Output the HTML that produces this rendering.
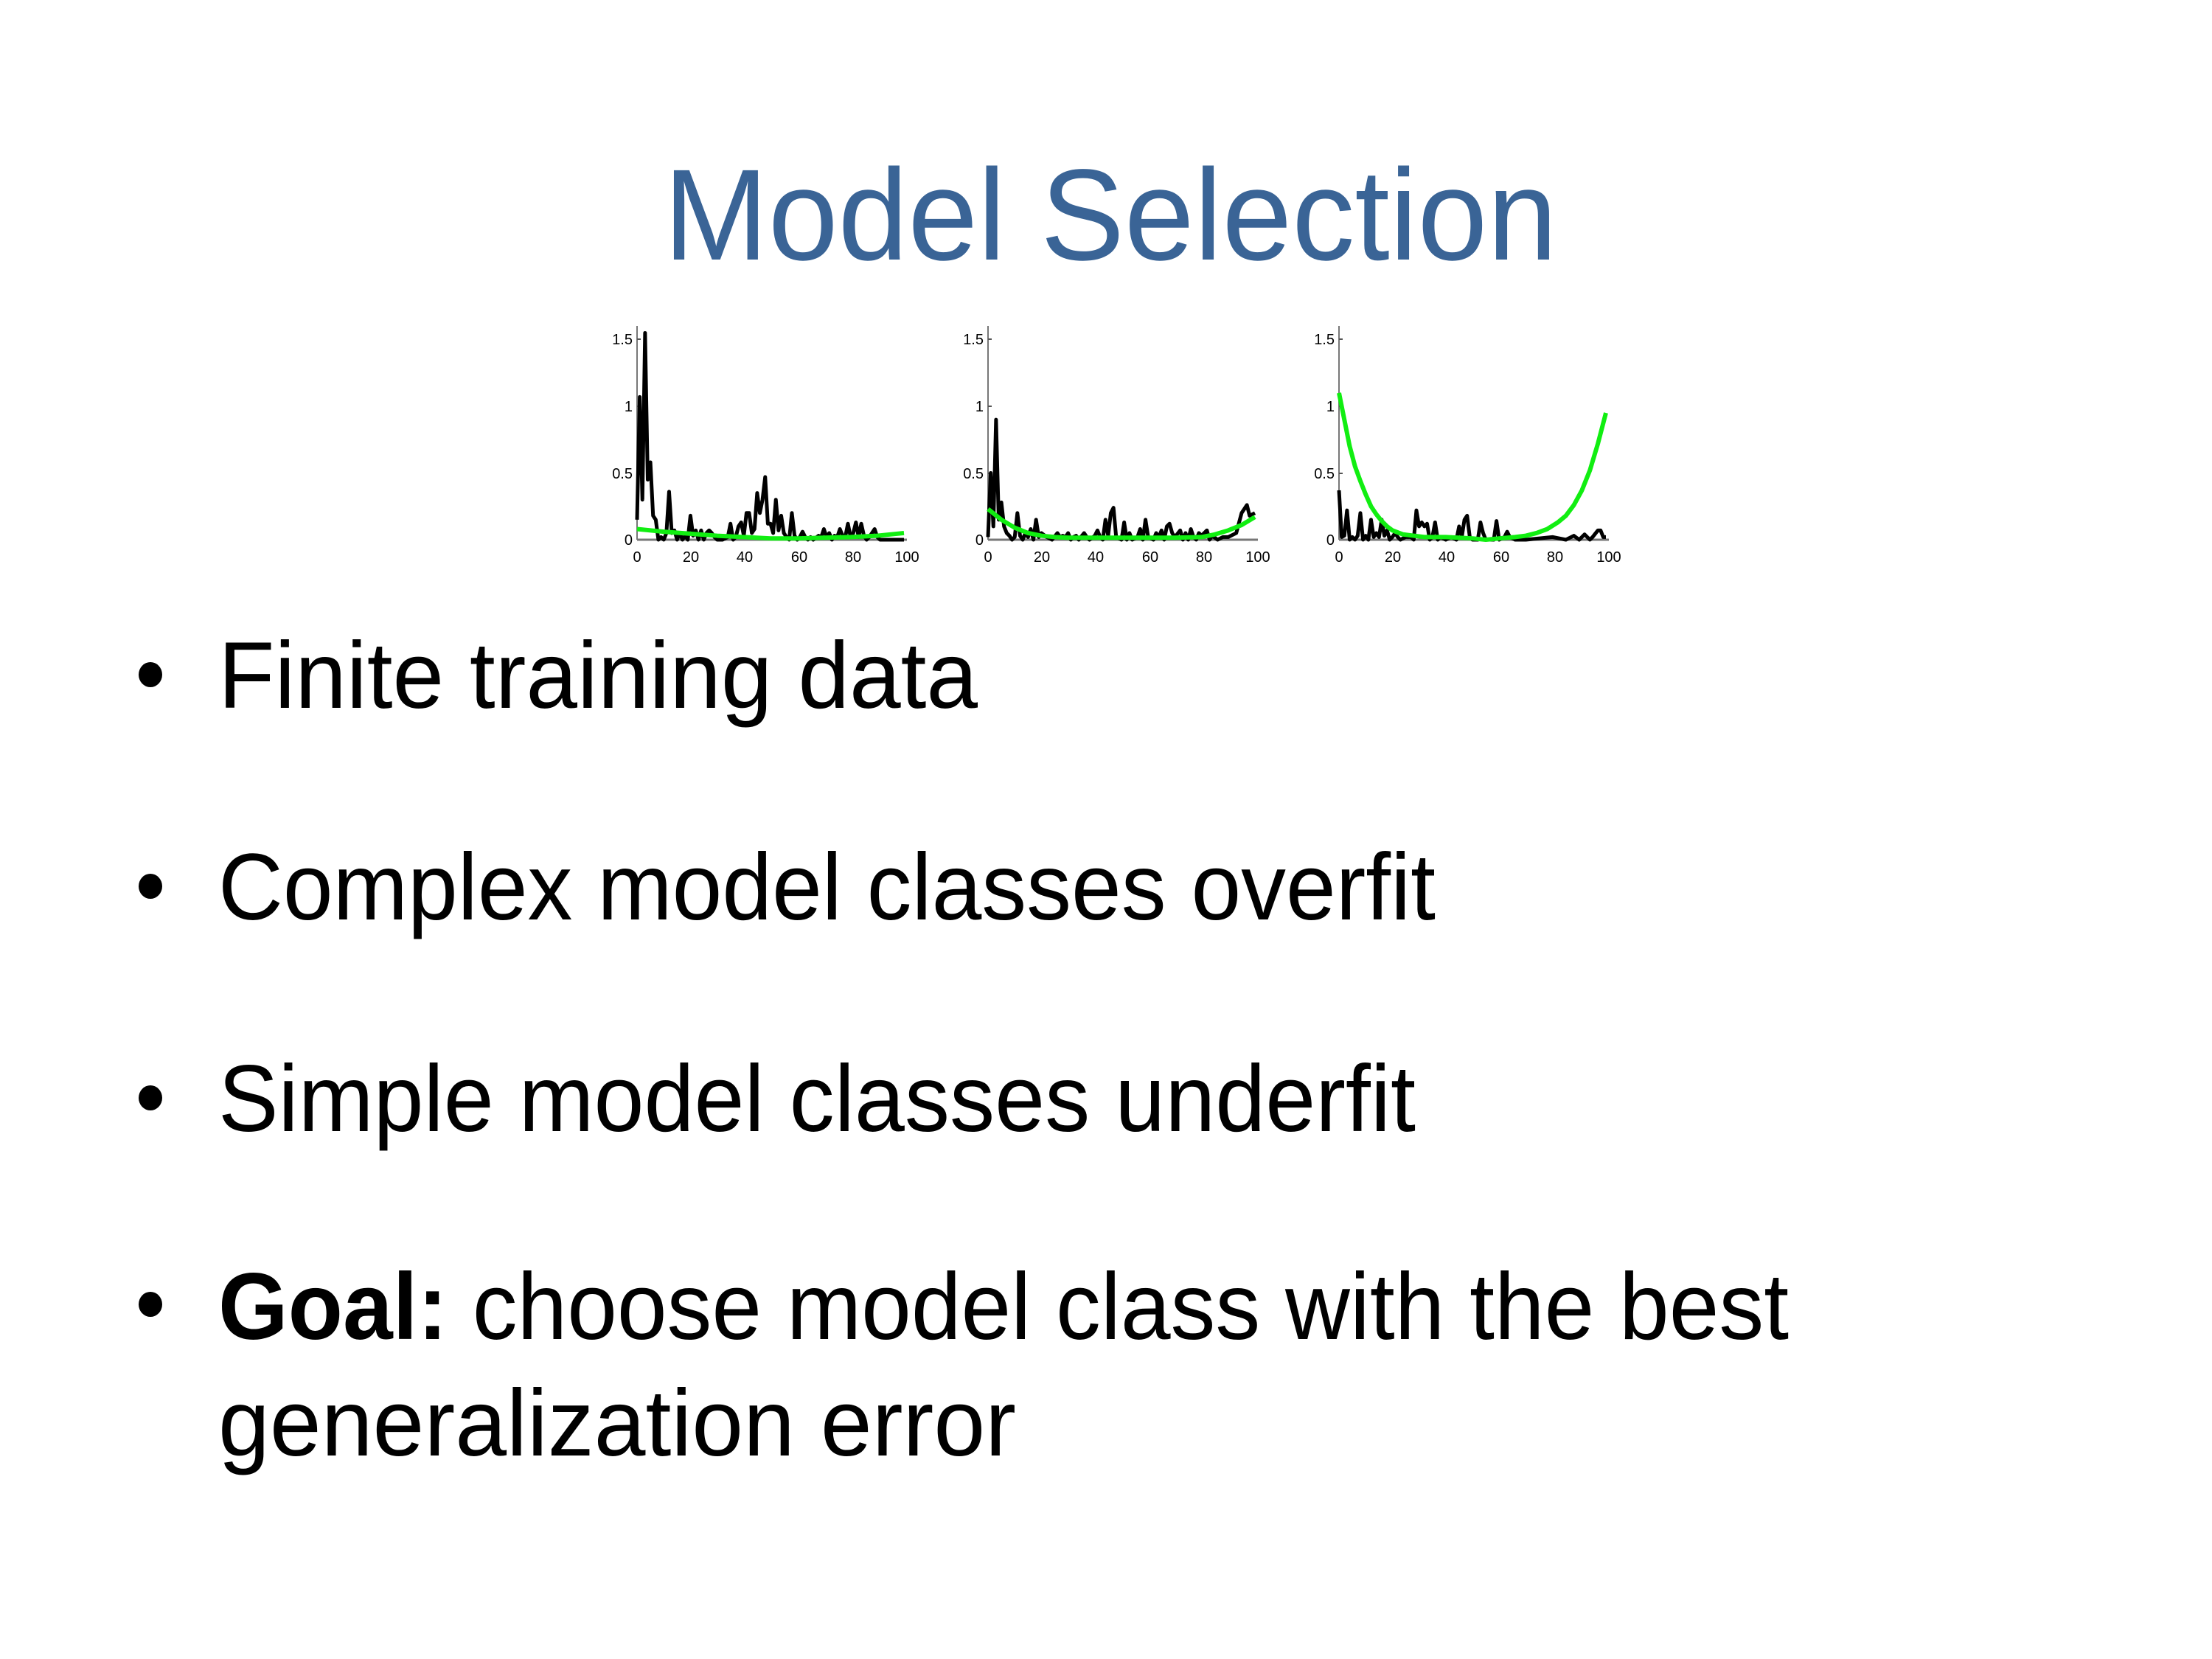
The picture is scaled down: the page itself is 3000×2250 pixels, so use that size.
<!DOCTYPE html>
<html><head><meta charset="utf-8"><style>
html,body{margin:0;padding:0;background:#fff;}
svg{display:block;}
</style></head><body>
<svg width="3000" height="2250" viewBox="0 0 3000 2250" xmlns="http://www.w3.org/2000/svg">
<rect width="3000" height="2250" fill="#fff"/>
<text x="900" y="352" font-family="Liberation Sans, sans-serif" font-size="176" fill="#3a6496" textLength="1212" lengthAdjust="spacingAndGlyphs">Model Selection</text>

<defs>
<g id="axes">
  <line x1="0" y1="0" x2="0" y2="-290" stroke="#777" stroke-width="2"/>
  <line x1="0" y1="0" x2="366" y2="0" stroke="#777" stroke-width="3"/>
  <g stroke="#555" stroke-width="2">
    <line x1="0" y1="-272" x2="5" y2="-272"/><line x1="0" y1="-181" x2="5" y2="-181"/><line x1="0" y1="-90" x2="5" y2="-90"/>
  </g>
  <g font-family="Liberation Sans, sans-serif" font-size="20" fill="#000" text-anchor="end">
    <text x="-6" y="-265">1.5</text><text x="-6" y="-174">1</text><text x="-6" y="-83">0.5</text><text x="-6" y="7">0</text>
  </g>
  <g font-family="Liberation Sans, sans-serif" font-size="20" fill="#000" text-anchor="middle">
    <text x="0" y="30">0</text><text x="73" y="30">20</text><text x="146" y="30">40</text><text x="220" y="30">60</text><text x="293" y="30">80</text><text x="366" y="30">100</text>
  </g>
</g>
</defs>

<!-- Plot 1 -->
<g transform="translate(864,732)">
<use href="#axes"/>
<g transform="scale(3.62,-181)" fill="none" stroke-linejoin="round">
<polyline vector-effect="non-scaling-stroke" stroke="#000" stroke-width="5" points="0,.15 1,1.07 2,.3 3,1.55 4,.45 5,.58 6,.18 7,.15 8,0 9,.02 10,0 11,.05 12,.36 13,.05 14,.07 15,0 16,.05 17,0 18,.03 19,0 20,.18 21,.03 22,.07 23,0 24,.07 25,0 26,.05 27,.07 28,.05 29,.02 30,0 32,0 34,.02 35,.12 36,0 37,.02 38,.1 39,.13 40,.03 41,.2 42,.2 43,.05 44,.08 45,.35 46,.2 47,.3 48,.47 49,.12 50,.12 51,.05 52,.3 53,.07 54,.18 55,.05 56,.02 57,0 58,.2 59,.03 60,0 61,.02 62,.06 63,.02 64,0 65,.02 66,0 68,.03 69,.02 70,.08 71,.02 72,.05 73,0 74,.03 75,.02 76,.08 77,.03 78,.02 79,.12 80,.02 81,.05 82,.13 83,.02 84,.12 85,.03 86,0 87,.02 88,.05 89,.08 90,.02 91,0 100,0"/>
<polyline vector-effect="non-scaling-stroke" stroke="#11ee11" stroke-width="6" points="0,.08 10,.06 20,.045 30,.03 40,.02 50,.01 60,.01 70,.015 80,.02 90,.03 100,.05"/>
</g></g>

<!-- Plot 2 -->
<g transform="translate(1340,732)">
<use href="#axes"/>
<g transform="scale(3.62,-181)" fill="none" stroke-linejoin="round">
<polyline vector-effect="non-scaling-stroke" stroke="#000" stroke-width="5" points="0,.02 1,.5 2,.1 3,.9 4,.15 5,.28 6,.1 7,.05 8,.03 9,0 10,.02 11,.2 12,.03 13,0 14,.05 15,.02 16,.08 17,0 18,.15 19,.02 20,.05 22,.02 24,0 26,.05 27,.02 28,.03 29,.02 30,.05 31,0 32,.02 33,.03 34,0 36,.05 37,.02 38,0 40,.03 41,.07 42,.02 43,0 44,.15 45,.03 46,.2 47,.24 48,.02 50,0 51,.13 52,0 53,.05 54,0 56,.02 57,.08 58,0 59,.15 60,.02 62,0 63,.05 64,.02 65,.07 66,0 67,.1 68,.12 69,.05 70,.02 72,.07 73,0 74,.05 75,0 76,.08 77,.02 78,0 79,.05 80,.03 82,.07 83,0 84,.03 86,0 88,.02 90,.02 93,.05 95,.2 97,.26 98,.18 100,.2"/>
<polyline vector-effect="non-scaling-stroke" stroke="#11ee11" stroke-width="6" points="0,.23 5,.15 10,.09 15,.05 20,.03 25,.02 30,.015 50,.015 70,.015 80,.02 85,.04 90,.07 95,.11 100,.17"/>
</g></g>

<!-- Plot 3 -->
<g transform="translate(1816,732)">
<use href="#axes"/>
<g transform="scale(3.62,-181)" fill="none" stroke-linejoin="round">
<polyline vector-effect="non-scaling-stroke" stroke="#000" stroke-width="5" points="0,.37 1,.02 2,.03 3,.22 4,0 5,.02 6,0 7,.03 8,.2 9,0 10,.03 11,0 12,.15 13,.02 14,.05 15,.02 16,.15 17,.03 18,.07 19,0 20,.02 21,.05 22,.02 23,0 25,.02 27,.02 28,0 29,.22 30,.1 31,.13 32,.1 33,.12 34,0 35,.02 36,.13 37,0 38,.02 40,0 42,.02 44,0 45,.1 46,.02 47,.15 48,.18 49,.02 50,0 52,0 53,.13 54,.05 55,0 58,0 59,.14 60,0 62,.02 63,.06 64,.02 66,0 70,0 80,.02 85,0 88,.03 90,0 92,.04 93,.02 94,0 95,.02 97,.07 98,.07 99,.02 100,.02"/>
<polyline vector-effect="non-scaling-stroke" stroke="#11ee11" stroke-width="6" points="0,1.1 2,.9 4,.7 6,.55 8,.44 10,.34 12,.25 14,.19 16,.14 18,.1 20,.07 24,.04 28,.03 32,.02 40,.02 50,.01 55,0 60,.01 66,.02 70,.03 74,.05 78,.08 82,.13 85,.18 88,.26 91,.37 94,.52 97,.72 100,.95"/>
</g></g>

<!-- Bullets -->
<g fill="#000">
<ellipse cx="204" cy="915" rx="16" ry="17"/>
<ellipse cx="204" cy="1202" rx="16" ry="17"/>
<ellipse cx="204" cy="1489" rx="16" ry="17"/>
<ellipse cx="204" cy="1769" rx="16" ry="17"/>
</g>
<g font-family="Liberation Sans, sans-serif" font-size="128" fill="#000">
<text x="296" y="960" textLength="1030" lengthAdjust="spacingAndGlyphs">Finite training data</text>
<text x="296" y="1247" textLength="1651" lengthAdjust="spacingAndGlyphs">Complex model classes overfit</text>
<text x="296" y="1534" textLength="1624" lengthAdjust="spacingAndGlyphs">Simple model classes underfit</text>
<text x="296" y="1816" textLength="2130" lengthAdjust="spacingAndGlyphs"><tspan font-weight="bold">Goal:</tspan> choose model class with the best</text>
<text x="296" y="1974" textLength="1082" lengthAdjust="spacingAndGlyphs">generalization error</text>
</g>
</svg>
</body></html>
